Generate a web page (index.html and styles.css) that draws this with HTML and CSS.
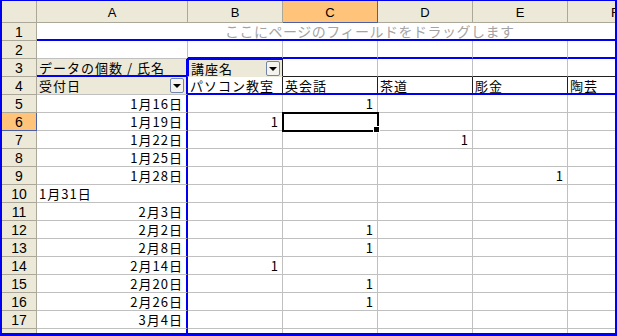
FILE: index.html
```html
<!DOCTYPE html>
<html lang="ja">
<head>
<meta charset="UTF-8">
<title>ピボットテーブル</title>
<link rel="stylesheet" href="styles.css">
</head>
<body>

<div class="frame">
<div class="sheet">
  <!-- column headers -->
  <div class="corner"></div>
  <div class="ch">A</div>
  <div class="ch">B</div>
  <div class="ch sel-col">C</div>
  <div class="ch">D</div>
  <div class="ch">E</div>
  <div class="ch">F</div>

  <!-- row 1: page field drop zone -->
  <div class="rh">1</div>
  <div class="c page-zone blue-b">ここにページのフィールドをドラッグします</div>

  <!-- row 2 -->
  <div class="rh">2</div>
  <div class="c"></div>
  <div class="c blue-b"></div>
  <div class="c blue-b"></div>
  <div class="c blue-b"></div>
  <div class="c blue-b"></div>
  <div class="c blue-b"></div>

  <!-- row 3 -->
  <div class="rh">3</div>
  <div class="c field blue-b blue-r">データの個数 / 氏名</div>
  <div class="c field col-field dark-r">講座名<span class="drop"></span></div>
  <div class="c dark-b"></div>
  <div class="c dark-b"></div>
  <div class="c dark-b"></div>
  <div class="c dark-b"></div>

  <!-- row 4 -->
  <div class="rh">4</div>
  <div class="c field blue-r">受付日<span class="drop"></span></div>
  <div class="c blue-b dark-r">パソコン教室</div>
  <div class="c blue-b dark-r">英会話</div>
  <div class="c blue-b dark-r">茶道</div>
  <div class="c blue-b dark-r">彫金</div>
  <div class="c blue-b dark-r">陶芸</div>

  <div class="rh">5</div>
  <div class="c num blue-r">1月16日</div>
  <div class="c"></div>
  <div class="c num">1</div>
  <div class="c"></div>
  <div class="c"></div>
  <div class="c"></div>

  <div class="rh sel-row">6</div>
  <div class="c num blue-r">1月19日</div>
  <div class="c num">1</div>
  <div class="c active"></div>
  <div class="c"></div>
  <div class="c"></div>
  <div class="c"></div>

  <div class="rh">7</div>
  <div class="c num blue-r">1月22日</div>
  <div class="c"></div>
  <div class="c"></div>
  <div class="c num">1</div>
  <div class="c"></div>
  <div class="c"></div>

  <div class="rh">8</div>
  <div class="c num blue-r">1月25日</div>
  <div class="c"></div>
  <div class="c"></div>
  <div class="c"></div>
  <div class="c"></div>
  <div class="c"></div>

  <div class="rh">9</div>
  <div class="c num blue-r">1月28日</div>
  <div class="c"></div>
  <div class="c"></div>
  <div class="c"></div>
  <div class="c num">1</div>
  <div class="c"></div>

  <div class="rh">10</div>
  <div class="c blue-r">1月31日</div>
  <div class="c"></div>
  <div class="c"></div>
  <div class="c"></div>
  <div class="c"></div>
  <div class="c"></div>

  <div class="rh">11</div>
  <div class="c num blue-r">2月3日</div>
  <div class="c"></div>
  <div class="c"></div>
  <div class="c"></div>
  <div class="c"></div>
  <div class="c"></div>

  <div class="rh">12</div>
  <div class="c num blue-r">2月2日</div>
  <div class="c"></div>
  <div class="c num">1</div>
  <div class="c"></div>
  <div class="c"></div>
  <div class="c"></div>

  <div class="rh">13</div>
  <div class="c num blue-r">2月8日</div>
  <div class="c"></div>
  <div class="c num">1</div>
  <div class="c"></div>
  <div class="c"></div>
  <div class="c"></div>

  <div class="rh">14</div>
  <div class="c num blue-r">2月14日</div>
  <div class="c num">1</div>
  <div class="c"></div>
  <div class="c"></div>
  <div class="c"></div>
  <div class="c"></div>

  <div class="rh">15</div>
  <div class="c num blue-r">2月20日</div>
  <div class="c"></div>
  <div class="c num">1</div>
  <div class="c"></div>
  <div class="c"></div>
  <div class="c"></div>

  <div class="rh">16</div>
  <div class="c num blue-r">2月26日</div>
  <div class="c"></div>
  <div class="c num">1</div>
  <div class="c"></div>
  <div class="c"></div>
  <div class="c"></div>

  <div class="rh">17</div>
  <div class="c num blue-r">3月4日</div>
  <div class="c"></div>
  <div class="c"></div>
  <div class="c"></div>
  <div class="c"></div>
  <div class="c"></div>

  <div class="rh">18</div>
  <div class="c num blue-r">3月10日</div>
  <div class="c"></div>
  <div class="c"></div>
  <div class="c"></div>
  <div class="c"></div>
  <div class="c"></div>
</div>
</div>

</body>
</html>
```

FILE: styles.css
```css
* {
  box-sizing: border-box;
  margin: 0;
  padding: 0;
}

body {
  width: 617px;
  height: 336px;
  overflow: hidden;
  background: #fff;
  font-family: "Noto Sans CJK JP", "DejaVu Sans", sans-serif;
  font-size: 13px;
  color: #000;
}

.frame {
  width: 617px;
  height: 336px;
  border-style: solid;
  border-color: #0000f0;
  border-width: 1px 2px 3px 2px;
  overflow: hidden;
}

.sheet {
  display: grid;
  grid-template-columns: 35px 151px 95px 95px 95px 95px 95px;
  grid-template-rows: 22px repeat(18, 18px);
  width: 631px;
}

.corner,
.ch,
.rh {
  background-color: #ece9d8;
  border-right: 1px solid #aca899;
  border-bottom: 1px solid #aca899;
  display: flex;
  align-items: center;
  justify-content: center;
  line-height: 1;
}

.ch {
  font-family: "Liberation Sans", sans-serif;
  font-size: 13px;
  padding-top: 1px;
}

.rh {
  font-family: "Liberation Sans", sans-serif;
  font-size: 14px;
}

.sel-col,
.sel-row {
  background-color: #ffc47a;
  border-color: #4b5fa8;
}

.c {
  border-right: 1px solid #c0c0c0;
  border-bottom: 1px solid #c0c0c0;
  display: flex;
  align-items: center;
  padding: 0 2px;
  white-space: nowrap;
  overflow: hidden;
  line-height: 1;
  letter-spacing: 1px;
  position: relative;
}

.num {
  justify-content: flex-end;
  padding-right: 3px;
}

.page-zone {
  grid-column: 2 / span 6;
  color: #a4a4a4;
  font-size: 14px;
  padding-left: 188px;
  border-right: none;
  letter-spacing: 0.5px;
}

.field {
  background-color: #ece9d8;
}

.col-field {
  border-top: 2px solid #0000f0;
  border-left: 2px solid #0000f0;
  border-bottom-color: #ece9d8;
  margin-top: -1px;
  margin-left: -1px;
}

.blue-b {
  border-bottom: 2px solid #0000f0;
}

.blue-r {
  border-right: 2px solid #0000f0;
}

.dark-r {
  border-right-color: #202020;
}

.dark-b {
  border-bottom-color: #202020;
}

.drop {
  margin-left: auto;
  width: 14px;
  height: 15px;
  border: 1px solid #6f86a8;
  border-radius: 2px;
  background-color: #f4f3ee;
  display: flex;
  align-items: center;
  justify-content: center;
}

.drop::after {
  content: "";
  border-left: 4px solid transparent;
  border-right: 4px solid transparent;
  border-top: 4px solid #000;
  margin-top: 1px;
}

.active {
  outline: 2px solid #000;
  outline-offset: -1px;
  overflow: visible;
  z-index: 1;
}

.active::after {
  content: "";
  position: absolute;
  right: -3px;
  bottom: -3px;
  width: 5px;
  height: 5px;
  background-color: #000;
  border: 1px solid #fff;
}
```
